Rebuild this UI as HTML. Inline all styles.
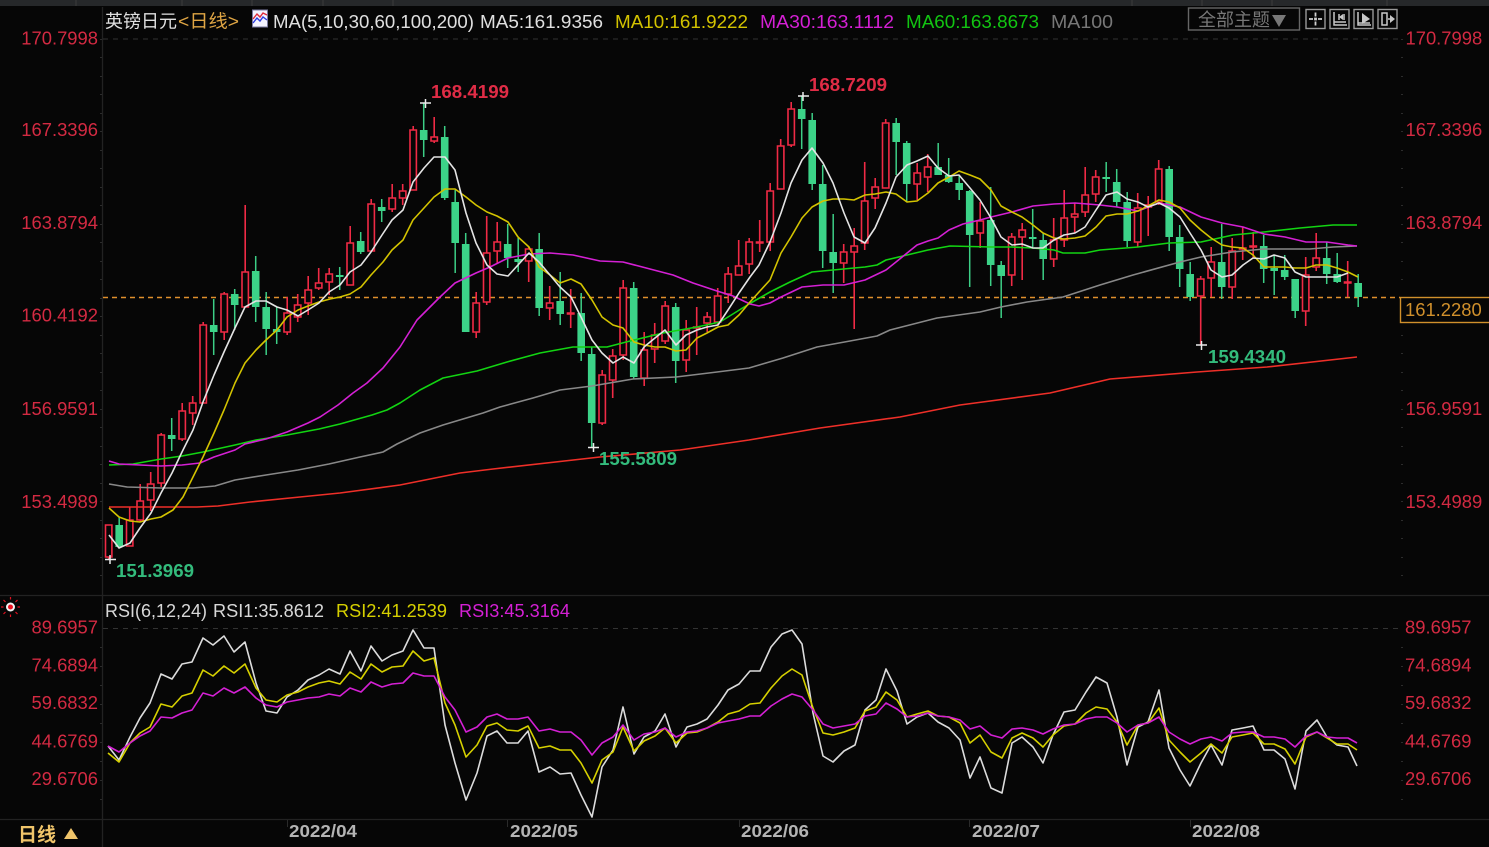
<!DOCTYPE html>
<html><head><meta charset="utf-8"><title>英镑日元</title>
<style>
html,body{margin:0;padding:0;background:#060606;width:1489px;height:847px;overflow:hidden}
svg{display:block;position:absolute;left:0;top:0;filter:blur(.3px)}
text{font-family:"Liberation Sans","Noto Sans CJK SC",sans-serif}
.r{fill:#d32a42;font-size:18.4px}
.l{fill:none;stroke-linejoin:round;stroke-width:1.6}
.b{font-weight:bold;font-size:18px}
.d{font-weight:bold;font-size:17.6px;fill:#b4b4b4}
</style></head><body>
<svg width="1489" height="847" viewBox="0 0 1489 847" xmlns="http://www.w3.org/2000/svg">
<rect width="1489" height="847" fill="#060606"/>
<rect width="1489" height="6" fill="#26282a"/>
<path d="M76 0V6M182 0V6M252 0V6M323 0V6M393 0V6M1132 0V6M1202 0V6M1272 0V6M1387 0V6" stroke="#3c3c3c"/>
<!-- frame -->
<path d="M102.5 7V847M0 595.5H1489M0 819.5H1489" stroke="#222" stroke-width="1.3" fill="none"/>
<path d="M287.5 820V827M507.5 820V827M739.5 820V827M969.5 820V827M1190.5 820V827" stroke="#2a2a2a"/>
<path d="M103 39H1400M103 628.5H1400" stroke="#333" stroke-dasharray="5 5"/>
<path d="M101 39v1M101 57v1M101 76v1M101 94v1M101 113v1M101 131v1M101 150v1M101 168v1M101 187v1M101 205v1M101 224v1M101 242v1M101 261v1M101 279v1M101 298v1M101 316v1M101 335v1M101 353v1M101 372v1M101 390v1M101 409v1M101 427v1M101 446v1M101 464v1M101 483v1M101 501v1M101 520v1M101 538v1M101 557v1M101 575v1M101 647v1M101 666v1M101 685v1M101 704v1M101 723v1M101 742v1M101 761v1M101 780v1M101 799v1" stroke="#2c2c2c" stroke-width="2"/>
<path d="M1402 39v1M1402 57v1M1402 76v1M1402 94v1M1402 113v1M1402 131v1M1402 150v1M1402 168v1M1402 187v1M1402 205v1M1402 224v1M1402 242v1M1402 261v1M1402 279v1M1402 335v1M1402 353v1M1402 372v1M1402 390v1M1402 409v1M1402 427v1M1402 446v1M1402 464v1M1402 483v1M1402 501v1M1402 520v1M1402 538v1M1402 557v1M1402 575v1M1402 647v1M1402 666v1M1402 685v1M1402 704v1M1402 723v1M1402 742v1M1402 761v1M1402 780v1M1402 799v1" stroke="#2c2c2c" stroke-width="2"/>
<!-- price line -->
<path d="M103 297.5H1400" stroke="#e0902c" stroke-width="1.6" stroke-dasharray="5 4"/>

<!-- red wicks -->
<path fill="none" stroke="#f02a45" stroke-width="1.6" d="M108.7 557V559M129.7 507V520M140.2 484V501M140.2 520V522M150.7 472V484M150.7 500V511M161.2 433V435M161.2 483V487M182.2 403V411M182.2 439V441M192.7 396V403M192.7 413V425M203.2 322V325M224.2 292V294M224.2 332V340M245.2 205V272M287.2 297V313M287.2 332V335M297.7 294V305M297.7 317V322M308.2 276V290M308.2 303V315M318.7 268V283M318.7 288V290M329.2 268V274M329.2 282V295M350.2 226V243M371.2 199V204M392.2 184V198M392.2 209V212M402.7 184V191M402.7 198V205M413.2 126V130M434.2 117V137M434.2 141V143M476.2 292V303M476.2 332V338M486.7 216V253M486.7 302V305M497.2 222V242M497.2 251V263M528.7 247V249M528.7 261V282M549.7 286V303M549.7 308V320M570.7 289V313M570.7 314V328M602.2 370V375M602.2 423V425M612.7 349V356M612.7 380V398M623.2 280V288M623.2 355V360M644.2 332V350M644.2 378V386M654.7 323V335M654.7 349V363M665.2 301V306M665.2 341V344M686.2 320V330M686.2 360V372M696.7 307V327M696.7 328V355M707.2 312V317M707.2 323V332M717.7 288V296M717.7 322V325M728.2 267V274M728.2 294V303M738.7 240V266M749.2 238V242M749.2 264V274M759.7 220V252M770.2 183V191M770.2 242V251M780.7 139V146M791.2 102V109M791.2 145V147M843.7 244V252M843.7 263V283M854.2 228V246M854.2 252V329M864.7 162V201M864.7 243V250M875.2 178V187M875.2 198V209M885.7 119V123M917.2 163V173M917.2 184V200M927.7 154V167M927.7 177V192M980.2 202V221M980.2 233V248M1011.7 233V237M1011.7 275V286M1022.2 223V230M1022.2 237V280M1053.7 218V240M1053.7 259V267M1064.2 190V218M1064.2 240V247M1074.7 203V214M1074.7 217V233M1085.2 167V195M1085.2 212V217M1095.7 170V177M1095.7 194V202M1137.7 193V208M1137.7 242V247M1148.2 196V205M1148.2 207V236M1158.7 160V169M1158.7 202V205M1200.7 276V279M1200.7 296V345M1211.2 247V262M1211.2 278V297M1232.2 238V251M1232.2 287V299M1242.7 227V248M1242.7 249V260M1253.2 232V246M1253.2 247V258M1305.7 257V275M1305.7 311V326M1316.2 233V258M1316.2 267V271M1347.7 261V282M1347.7 283V297"/>
<!-- red bodies -->
<path fill="#060606" stroke="#f02a45" stroke-width="1.6" d="M108.7 525m-3.2 0h6.4V557h-6.4zM129.7 520m-3.2 0h6.4V546h-6.4zM140.2 501m-3.2 0h6.4V520h-6.4zM150.7 484m-3.2 0h6.4V500h-6.4zM161.2 435m-3.2 0h6.4V483h-6.4zM182.2 411m-3.2 0h6.4V439h-6.4zM192.7 403m-3.2 0h6.4V413h-6.4zM203.2 325m-3.2 0h6.4V403h-6.4zM224.2 294m-3.2 0h6.4V332h-6.4zM245.2 272m-3.2 0h6.4V307h-6.4zM287.2 313m-3.2 0h6.4V332h-6.4zM297.7 305m-3.2 0h6.4V317h-6.4zM308.2 290m-3.2 0h6.4V303h-6.4zM318.7 283m-3.2 0h6.4V288h-6.4zM329.2 274m-3.2 0h6.4V282h-6.4zM350.2 243m-3.2 0h6.4V285h-6.4zM371.2 204m-3.2 0h6.4V251h-6.4zM392.2 198m-3.2 0h6.4V209h-6.4zM402.7 191m-3.2 0h6.4V198h-6.4zM413.2 130m-3.2 0h6.4V190h-6.4zM434.2 137m-3.2 0h6.4V141h-6.4zM476.2 303m-3.2 0h6.4V332h-6.4zM486.7 253m-3.2 0h6.4V302h-6.4zM497.2 242m-3.2 0h6.4V251h-6.4zM528.7 249m-3.2 0h6.4V261h-6.4zM549.7 303m-3.2 0h6.4V308h-6.4zM570.7 313m-3.2 0h6.4V314h-6.4zM602.2 375m-3.2 0h6.4V423h-6.4zM612.7 356m-3.2 0h6.4V380h-6.4zM623.2 288m-3.2 0h6.4V355h-6.4zM644.2 350m-3.2 0h6.4V378h-6.4zM654.7 335m-3.2 0h6.4V349h-6.4zM665.2 306m-3.2 0h6.4V341h-6.4zM686.2 330m-3.2 0h6.4V360h-6.4zM696.7 327m-3.2 0h6.4V328h-6.4zM707.2 317m-3.2 0h6.4V323h-6.4zM717.7 296m-3.2 0h6.4V322h-6.4zM728.2 274m-3.2 0h6.4V294h-6.4zM738.7 266m-3.2 0h6.4V275h-6.4zM749.2 242m-3.2 0h6.4V264h-6.4zM759.7 242m-3.2 0h6.4V243h-6.4zM770.2 191m-3.2 0h6.4V242h-6.4zM780.7 146m-3.2 0h6.4V189h-6.4zM791.2 109m-3.2 0h6.4V145h-6.4zM843.7 252m-3.2 0h6.4V263h-6.4zM854.2 246m-3.2 0h6.4V252h-6.4zM864.7 201m-3.2 0h6.4V243h-6.4zM875.2 187m-3.2 0h6.4V198h-6.4zM885.7 123m-3.2 0h6.4V188h-6.4zM917.2 173m-3.2 0h6.4V184h-6.4zM927.7 167m-3.2 0h6.4V177h-6.4zM980.2 221m-3.2 0h6.4V233h-6.4zM1011.7 237m-3.2 0h6.4V275h-6.4zM1022.2 230m-3.2 0h6.4V237h-6.4zM1053.7 240m-3.2 0h6.4V259h-6.4zM1064.2 218m-3.2 0h6.4V240h-6.4zM1074.7 214m-3.2 0h6.4V217h-6.4zM1085.2 195m-3.2 0h6.4V212h-6.4zM1095.7 177m-3.2 0h6.4V194h-6.4zM1137.7 208m-3.2 0h6.4V242h-6.4zM1148.2 205m-3.2 0h6.4V207h-6.4zM1158.7 169m-3.2 0h6.4V202h-6.4zM1200.7 279m-3.2 0h6.4V296h-6.4zM1211.2 262m-3.2 0h6.4V278h-6.4zM1232.2 251m-3.2 0h6.4V287h-6.4zM1242.7 248m-3.2 0h6.4V249h-6.4zM1253.2 246m-3.2 0h6.4V247h-6.4zM1305.7 275m-3.2 0h6.4V311h-6.4zM1316.2 258m-3.2 0h6.4V267h-6.4zM1347.7 282m-3.2 0h6.4V283h-6.4z"/>
<!-- green wicks -->
<path fill="none" stroke="#3ccf86" stroke-width="1.5" d="M119.2 517V548M171.7 418V451M213.7 299V355M234.7 289V330M255.7 256V322M266.2 292V355M276.7 307V344M339.7 267V290M360.7 232V254M381.7 199V222M423.7 103V157M444.7 126V200M455.2 190V273M465.7 233V332M507.7 224V268M518.2 238V272M539.2 233V316M560.2 272V325M581.2 293V361M591.7 347V447M633.7 282V379M675.7 303V383M801.7 96V149M812.2 113V190M822.7 165V268M833.2 214V293M896.2 118V175M906.7 141V202M938.2 143V175M948.7 158V183M959.2 175V200M969.7 190V287M990.7 187V286M1001.2 261V318M1032.7 209V247M1043.2 233V280M1106.2 162V192M1116.7 169V207M1127.2 192V247M1169.2 166V251M1179.7 225V287M1190.2 262V301M1221.7 224V299M1263.7 235V283M1274.2 255V295M1284.7 255V280M1295.2 279V318M1326.7 242V284M1337.2 253V283M1358.2 274V307"/>
<!-- green bodies -->
<path fill="#3cd388" d="M119.2 525m-3.8 0h7.6V547h-7.6zM171.7 435m-3.8 0h7.6V439h-7.6zM213.7 325m-3.8 0h7.6V332h-7.6zM234.7 294m-3.8 0h7.6V305h-7.6zM255.7 271m-3.8 0h7.6V307h-7.6zM266.2 307m-3.8 0h7.6V329h-7.6zM276.7 329m-3.8 0h7.6V332h-7.6zM339.7 275m-3.8 0h7.6V277h-7.6zM360.7 241m-3.8 0h7.6V252h-7.6zM381.7 207m-3.8 0h7.6V211h-7.6zM423.7 130m-3.8 0h7.6V140h-7.6zM444.7 137m-3.8 0h7.6V198h-7.6zM455.2 202m-3.8 0h7.6V243h-7.6zM465.7 244m-3.8 0h7.6V332h-7.6zM507.7 244m-3.8 0h7.6V258h-7.6zM518.2 259m-3.8 0h7.6V262h-7.6zM539.2 249m-3.8 0h7.6V308h-7.6zM560.2 301m-3.8 0h7.6V314h-7.6zM581.2 313m-3.8 0h7.6V353h-7.6zM591.7 354m-3.8 0h7.6V423h-7.6zM633.7 288m-3.8 0h7.6V377h-7.6zM675.7 307m-3.8 0h7.6V361h-7.6zM801.7 109m-3.8 0h7.6V119h-7.6zM812.2 120m-3.8 0h7.6V184h-7.6zM822.7 184m-3.8 0h7.6V251h-7.6zM833.2 252m-3.8 0h7.6V263h-7.6zM896.2 123m-3.8 0h7.6V142h-7.6zM906.7 143m-3.8 0h7.6V184h-7.6zM938.2 167m-3.8 0h7.6V175h-7.6zM948.7 175m-3.8 0h7.6V182h-7.6zM959.2 183m-3.8 0h7.6V190h-7.6zM969.7 191m-3.8 0h7.6V235h-7.6zM990.7 220m-3.8 0h7.6V265h-7.6zM1001.2 265m-3.8 0h7.6V276h-7.6zM1032.7 237m-3.8 0h7.6V239h-7.6zM1043.2 240m-3.8 0h7.6V259h-7.6zM1106.2 177m-3.8 0h7.6V179h-7.6zM1116.7 182m-3.8 0h7.6V202h-7.6zM1127.2 202m-3.8 0h7.6V241h-7.6zM1169.2 169m-3.8 0h7.6V237h-7.6zM1179.7 237m-3.8 0h7.6V269h-7.6zM1190.2 274m-3.8 0h7.6V297h-7.6zM1221.7 262m-3.8 0h7.6V287h-7.6zM1263.7 246m-3.8 0h7.6V269h-7.6zM1274.2 268m-3.8 0h7.6V271h-7.6zM1284.7 270m-3.8 0h7.6V277h-7.6zM1295.2 279m-3.8 0h7.6V311h-7.6zM1326.7 258m-3.8 0h7.6V274h-7.6zM1337.2 274m-3.8 0h7.6V282h-7.6zM1358.2 283m-3.8 0h7.6V297h-7.6z"/>

<!-- MA200 -->
<polyline class="l" stroke="#ee2f28" points="109,507 197,507 218,506 250,502 300,497 340,493 400,485 460,473 493,469 600,457 680,450 749,440 820,428 900,417 960,405 1050,393 1110,379 1197,372 1267,367 1357,357"/>
<!-- MA100 -->
<polyline class="l" stroke="#888" points="109,484 127,487 161,488 193,488 215,486 235,480 266,475 298,470 329,464 360,457 383,452 397,444 420,433 443,425 483,413 500,407 533,398 560,390 592,386 633,379 676,377 717,372 749,368 783,358 817,347 850,341 877,336 890,330 937,318 980,312 1001,307 1027,302 1063,297 1100,285 1133,275 1180,262 1201,257 1232,252 1264,249 1310,249 1333,247 1357,246"/>
<!-- MA60 -->
<polyline class="l" stroke="#12d412" points="109,465 133,464 161,459 182,456 203,452 235,445 256,440 287,435 319,429 340,424 372,415 387,410 400,403 420,390 443,378 477,371 507,362 540,353 573,347 607,347 630,341 663,333 697,327 720,322 749,304 770,292 790,282 812,272 833,270 854,268 865,267 877,265 886,260 907,255 928,250 950,246 991,247 1012,247 1033,248 1054,250 1063,253 1085,253 1100,250 1138,247 1169,243 1201,242 1233,235 1264,232 1300,228 1333,225 1357,225"/>
<!-- MA30 -->
<polyline class="l" stroke="#d420d4" points="109,461 119,464 140,465 161,466 182,465 200,463 214,457 235,450 245,444 266,439 287,432 308,423 320,417 338,405 353,393 367,383 383,368 400,347 417,320 440,297 455,283 476,273 490,267 508,258 529,254 550,253 573,255 600,261 623,262 650,269 673,275 693,283 717,291 733,296 750,304 759,306 770,303 781,297 802,287 823,285 844,285 865,280 886,270 896,262 917,245 928,241 938,238 949,230 963,224 980,220 991,217 1012,212 1033,206 1054,204 1075,203 1100,205 1117,207 1138,211 1159,203 1180,207 1201,217 1222,223 1243,227 1264,234 1285,237 1306,242 1327,242 1348,245 1357,246"/>
<!-- MA10 -->
<polyline class="l" stroke="#d3c300" points="109,508 119,517 130,521 140,522 151,519 161,517 173,510 183,497 193,477 203,457 214,433 224,410 235,383 245,363 256,350 266,340 277,330 287,317 298,310 308,306 319,302 330,299 340,297 350,294 361,287 371,275 383,262 392,250 403,240 413,220 424,208 434,197 445,189 455,189 466,197 476,205 487,212 497,216 508,222 518,237 529,247 539,267 550,275 560,283 571,279 581,284 592,300 602,317 613,325 623,328 634,342 644,345 655,347 665,347 676,351 686,350 697,338 707,333 718,327 728,325 739,315 750,302 759,292 770,280 781,253 791,237 802,218 812,207 823,201 833,199 844,199 854,200 865,195 875,194 886,192 896,194 907,202 917,201 928,193 938,183 949,177 959,171 970,175 980,179 991,190 1001,206 1012,212 1022,217 1033,225 1043,233 1054,238 1064,239 1075,238 1085,236 1096,227 1106,216 1117,214 1127,214 1138,211 1148,206 1159,200 1169,202 1180,208 1190,220 1201,230 1211,238 1222,245 1232,247 1243,248 1253,255 1264,267 1274,267 1285,267 1295,268 1306,268 1316,265 1327,265 1337,268 1348,272 1358,277"/>
<!-- MA5 -->
<polyline class="l" stroke="#e4e4e4" points="109,535 119,548 130,543 140,528 151,513 161,493 172,473 182,452 193,430 203,402 214,375 224,352 235,328 245,307 256,301 266,301 277,307 287,310 298,316 308,310 319,303 329,292 340,285 350,272 361,265 371,252 382,235 392,220 403,210 413,182 424,168 434,157 445,157 455,170 466,213 476,243 487,265 497,274 508,276 518,265 529,253 539,262 550,275 560,287 571,297 581,317 592,340 602,353 613,363 623,357 634,363 644,347 655,338 665,330 676,345 686,335 697,330 707,327 718,325 728,310 739,293 750,277 759,265 770,242 781,213 791,183 802,160 812,148 823,163 833,183 844,213 854,237 865,243 875,228 886,203 896,177 907,165 917,161 928,156 938,168 949,176 959,175 970,188 980,200 991,218 1001,237 1012,245 1022,244 1033,248 1043,248 1054,240 1064,235 1075,233 1085,227 1096,210 1106,195 1117,192 1127,199 1138,202 1148,207 1159,203 1169,208 1180,217 1190,233 1201,250 1211,270 1222,277 1232,275 1243,265 1253,258 1264,259 1274,255 1285,258 1295,272 1306,277 1316,277 1327,277 1337,277 1348,273"/>

<!-- extreme crosses -->
<path stroke="#ececec" stroke-width="1.5" fill="none" d="M420 103H431M425.5 99V108M798 96H809M803 92V101M105 559.5H116M110 555V564M588 447.5H599M593.5 443V452M1196 345H1207M1201.5 341V350"/>

<text class="b" x="431" y="98" fill="#e02c46" textLength="78" lengthAdjust="spacingAndGlyphs">168.4199</text>
<text class="b" x="809" y="91" fill="#e02c46" textLength="78" lengthAdjust="spacingAndGlyphs">168.7209</text>
<text class="b" x="116" y="577" fill="#33bb7c" textLength="78" lengthAdjust="spacingAndGlyphs">151.3969</text>
<text class="b" x="599" y="465" fill="#33bb7c" textLength="78" lengthAdjust="spacingAndGlyphs">155.5809</text>
<text class="b" x="1208" y="363" fill="#33bb7c" textLength="78" lengthAdjust="spacingAndGlyphs">159.4340</text>

<!-- left axis -->
<g text-anchor="end">
<text class="r" x="98" y="44.5">170.7998</text>
<text class="r" x="98" y="136">167.3396</text>
<text class="r" x="98" y="229">163.8794</text>
<text class="r" x="98" y="321.5">160.4192</text>
<text class="r" x="98" y="415">156.9591</text>
<text class="r" x="98" y="508">153.4989</text>
<text class="r" x="98" y="633.5">89.6957</text>
<text class="r" x="98" y="671.500">74.6894</text>
<text class="r" x="98" y="709">59.6832</text>
<text class="r" x="98" y="747.5">44.6769</text>
<text class="r" x="98" y="785">29.6706</text>
</g>
<!-- right axis -->
<text class="r" x="1405.5" y="44.5">170.7998</text>
<text class="r" x="1405.5" y="136">167.3396</text>
<text class="r" x="1405.5" y="229">163.8794</text>
<text class="r" x="1405.5" y="415">156.9591</text>
<text class="r" x="1405.5" y="508">153.4989</text>
<text class="r" x="1405" y="633.5">89.6957</text>
<text class="r" x="1405" y="671.5">74.6894</text>
<text class="r" x="1405" y="709">59.6832</text>
<text class="r" x="1405" y="747.5">44.6769</text>
<text class="r" x="1405" y="785">29.6706</text>
<rect x="1400.5" y="297.5" width="92" height="25" fill="#060606" stroke="#d0902c" stroke-width="1.4"/>
<text x="1405" y="316" font-size="18.4" fill="#d0902c">161.2280</text>

<!-- header -->
<text x="105" y="27.5" font-size="18" fill="#e0e0e0">英镑日元</text>
<text x="178" y="27.5" font-size="18" fill="#dfa544" textLength="61" lengthAdjust="spacingAndGlyphs">&lt;日线&gt;</text>
<rect x="252.5" y="10" width="15" height="17" fill="#f4f4ff" stroke="#7a7aa0"/>
<path d="M253 23l4-5 3 3 3-4 4 3" stroke="#2b3be0" fill="none" stroke-width="1.4"/>
<path d="M253 19l4-5 3 3 3-4 4 2" stroke="#e02b3b" fill="none" stroke-width="1.4"/>
<text x="273" y="28" font-size="18.5" fill="#e0e0e0" textLength="201" lengthAdjust="spacingAndGlyphs">MA(5,10,30,60,100,200)</text>
<text x="480" y="28" font-size="18.5" fill="#e0e0e0" textLength="123" lengthAdjust="spacingAndGlyphs">MA5:161.9356</text>
<text x="615" y="28" font-size="18.5" fill="#d3c300" textLength="133" lengthAdjust="spacingAndGlyphs">MA10:161.9222</text>
<text x="760" y="28" font-size="18.5" fill="#d420d4" textLength="134" lengthAdjust="spacingAndGlyphs">MA30:163.1112</text>
<text x="906" y="28" font-size="18.5" fill="#12c412" textLength="133" lengthAdjust="spacingAndGlyphs">MA60:163.8673</text>
<text x="1051" y="28" font-size="18.5" fill="#777" textLength="62" lengthAdjust="spacingAndGlyphs">MA100</text>

<!-- top right buttons -->
<rect x="1188.5" y="8" width="111" height="22" fill="#060606" stroke="#666" stroke-width="1.4"/>
<text x="1198" y="26" font-size="18" fill="#777">全部主题</text>
<path d="M1272 15h14l-7 12z" fill="#777"/>
<g fill="none" stroke="#999" stroke-width="1.4">
<rect x="1306" y="9.5" width="19" height="19"/>
<rect x="1330" y="9.5" width="19" height="19"/>
<rect x="1354" y="9.5" width="19" height="19"/>
<rect x="1378" y="9.5" width="19" height="19"/>
</g>
<path d="M1309 19h4M1318 19h4M1315.5 12.500v4M1315.5 21.500v4M1315 18.500h1v1h-1z" stroke="#d0d0d0" fill="none" stroke-width="1.8"/>
<path d="M1334 12v13h13M1334 22h12M1339 14v6M1344 14v6" stroke="#c8c8c8" fill="none" stroke-width="1.5"/>
<path d="M1339 17l4-3v6z" fill="#c8c8c8"/>
<path d="M1358 12v13h13M1358 23h12" stroke="#c8c8c8" fill="none" stroke-width="1.5"/>
<path d="M1362 13l8 6-8 5z" fill="#c8c8c8"/>
<path d="M1382 13h5v12h-5zM1388 19h4" stroke="#c8c8c8" fill="none" stroke-width="1.5"/>
<path d="M1390 15l5 4-5 4z" fill="#c8c8c8"/>

<!-- RSI white -->
<polyline class="l" stroke="#dcdcdc" points="108,746 119,760 130,737 140,718 150,703 161,674 172,679 182,664 192,662 203,638 213,645 224,636 234,652 245,642 256,683 266,711 277,713 287,697 298,690 308,680 319,675 329,669 340,674 350,651 361,671 371,646 382,661 392,655 403,651 413,630 424,648 434,648 445,725 455,763 466,800 477,773 487,736 497,731 507,743 518,743 528,731 539,772 550,767 560,774 571,773 581,795 592,817 602,767 613,750 623,707 634,754 644,737 655,731 665,714 676,747 687,727 697,724 707,719 718,705 728,690 739,684 750,671 760,671 771,647 782,634 792,630 802,644 813,713 823,756 833,762 844,751 855,745 865,710 876,700 886,669 897,691 907,724 917,717 928,713 938,722 949,728 960,740 970,778 980,757 991,788 1002,793 1012,743 1022,737 1033,747 1043,763 1053,735 1064,712 1075,710 1086,692 1096,677 1107,683 1117,717 1127,765 1138,727 1148,722 1159,690 1169,748 1180,770 1190,786 1201,763 1211,745 1222,765 1232,730 1243,728 1253,726 1264,750 1274,750 1285,759 1295,789 1306,731 1317,720 1327,737 1337,745 1348,747 1357,766"/>
<!-- RSI yellow -->
<polyline class="l" stroke="#d6d000" points="108,753 119,762 130,743 140,733 150,727 161,704 172,707 182,696 192,693 203,670 213,676 224,666 234,673 245,664 256,688 266,700 277,702 287,695 298,692 308,687 319,683 329,681 340,684 350,672 361,679 371,664 382,672 392,667 403,666 413,651 424,661 434,658 445,703 455,725 466,757 477,745 487,726 497,723 507,730 518,731 528,726 539,748 550,746 560,750 571,750 581,763 592,783 602,760 613,752 623,727 634,751 644,741 655,736 665,728 676,743 687,733 697,732 707,728 718,722 728,714 739,711 750,704 760,703 771,688 782,676 792,669 802,675 813,708 823,733 833,735 844,732 855,728 865,711 876,707 886,692 897,700 907,717 917,714 928,711 938,716 949,717 960,723 970,743 980,735 991,752 1002,758 1012,738 1022,733 1033,738 1043,747 1053,735 1064,726 1075,724 1086,713 1096,707 1107,709 1117,722 1127,745 1138,725 1148,723 1159,708 1169,740 1180,752 1190,762 1201,753 1211,744 1222,753 1232,737 1243,735 1253,733 1264,744 1274,744 1285,749 1295,764 1306,737 1317,732 1327,738 1337,744 1348,744 1357,750"/>
<!-- RSI magenta -->
<polyline class="l" stroke="#d420d4" points="108,746 119,752 130,743 140,736 150,731 161,717 172,718 182,713 192,710 203,693 213,696 224,688 234,693 245,687 256,698 266,705 277,707 287,702 298,700 308,698 319,697 329,694 340,696 350,688 361,692 371,682 382,687 392,684 403,683 413,673 424,676 434,676 445,697 455,710 466,732 477,727 487,717 497,714 507,719 518,719 528,717 539,731 550,729 560,732 571,732 581,740 592,755 602,743 613,737 623,725 634,740 644,734 655,732 665,728 676,737 687,732 697,731 707,728 718,723 728,721 739,719 750,716 760,716 771,706 782,699 792,694 802,697 813,710 823,724 833,728 844,726 855,724 865,716 876,714 886,703 897,709 907,717 917,716 928,713 938,716 949,717 960,720 970,729 980,726 991,735 1002,738 1012,729 1022,728 1033,730 1043,734 1053,729 1064,725 1075,724 1086,719 1096,717 1107,717 1117,723 1127,732 1138,725 1148,723 1159,717 1169,732 1180,739 1190,744 1201,739 1211,737 1222,741 1232,733 1243,732 1253,732 1264,737 1274,737 1285,739 1295,747 1306,736 1317,732 1327,737 1337,738 1348,738 1357,743"/>

<text x="105" y="617" font-size="18" fill="#d8d8d8" textLength="102" lengthAdjust="spacingAndGlyphs">RSI(6,12,24)</text>
<text x="213" y="617" font-size="18" fill="#d8d8d8" textLength="111" lengthAdjust="spacingAndGlyphs">RSI1:35.8612</text>
<text x="336" y="617" font-size="18" fill="#d6d000" textLength="111" lengthAdjust="spacingAndGlyphs">RSI2:41.2539</text>
<text x="459" y="617" font-size="18" fill="#d420d4" textLength="111" lengthAdjust="spacingAndGlyphs">RSI3:45.3164</text>

<!-- indicator -->
<circle cx="10.500" cy="607" r="4.500" fill="#f2f2f2"/><circle cx="10.500" cy="607" r="2.500" fill="#ee1020"/>
<path d="M10.500 597v2.500M10.500 614.500v2.500M1 607h2.500M17.500 607h2.500M3.500 600l2 2M15.500 612l2 2M3.500 614l2-2M15.500 602l2-2" stroke="#e01020" stroke-width="1.2"/>

<!-- date axis -->
<text x="18" y="841" font-size="19" font-weight="bold" fill="#efc46a">日线</text>
<path d="M71 828l7 11h-14z" fill="#efc46a"/>
<text class="d" x="289" y="837" textLength="68" lengthAdjust="spacingAndGlyphs">2022/04</text>
<text class="d" x="510" y="837" textLength="68" lengthAdjust="spacingAndGlyphs">2022/05</text>
<text class="d" x="741" y="837" textLength="68" lengthAdjust="spacingAndGlyphs">2022/06</text>
<text class="d" x="972" y="837" textLength="68" lengthAdjust="spacingAndGlyphs">2022/07</text>
<text class="d" x="1192" y="837" textLength="68" lengthAdjust="spacingAndGlyphs">2022/08</text>
</svg>
</body></html>
